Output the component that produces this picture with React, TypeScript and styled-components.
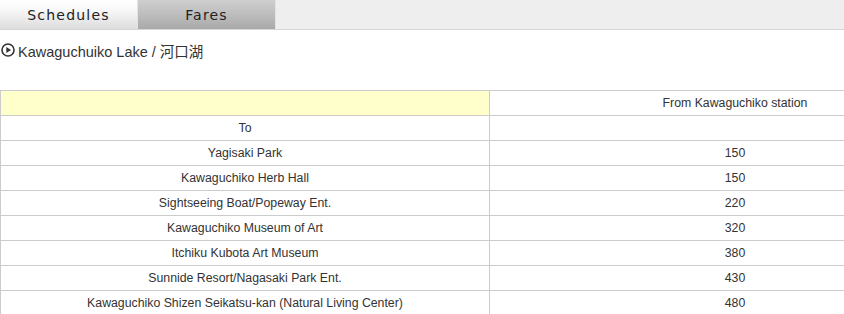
import React from "react";
import styled, { createGlobalStyle } from "styled-components";

const Global = createGlobalStyle`
  html, body { margin: 0; padding: 0; overflow: hidden; background: #fff; }
  body { font-family: Arial, "Liberation Sans", "Noto Sans CJK JP", sans-serif; color: #333; }
`;

const Page = styled.div`
  width: 980px;
`;

const TabBar = styled.div`
  display: flex;
  height: 29px;
  background: #eeeeee;
  border-bottom: 1px solid #d6d6d6;
`;

const Tab = styled.div<{ $active?: boolean }>`
  width: 137px;
  height: 29px;
  display: flex;
  align-items: center;
  justify-content: center;
  font-family: "DejaVu Sans", Verdana, sans-serif;
  font-size: 14px;
  letter-spacing: 1.2px;
  color: #222;
  background: ${(p) =>
    p.$active
      ? "linear-gradient(#ffffff, #f6f6f6 40%, #dcdcdc)"
      : "linear-gradient(#cfcfcf, #b9b9b9 60%, #a9a9a9)"};
  border-right: 1px solid #e4e4e4;
`;

const Title = styled.h2`
  display: flex;
  align-items: center;
  gap: 3px;
  margin: 10px 0 0 1px;
  font-size: 14.5px;
  font-weight: normal;
  color: #333;
  height: 20px;
`;

const Table = styled.table`
  margin-top: 30px;
  width: 980px;
  border-collapse: collapse;
  table-layout: fixed;
  font-size: 12.3px;
  color: #333;
`;

const Col = styled.col<{ $w: number }>`
  width: ${(p) => p.$w}px;
`;

const Cell = styled.td<{ $yellow?: boolean }>`
  height: 24px;
  padding: 0;
  border: 1px solid #cccccc;
  text-align: center;
  vertical-align: middle;
  white-space: nowrap;
  background: ${(p) => (p.$yellow ? "#ffffcc" : "#fff")};
`;

const rows: [string, string][] = [
  ["Yagisaki Park", "150"],
  ["Kawaguchiko Herb Hall", "150"],
  ["Sightseeing Boat/Popeway Ent.", "220"],
  ["Kawaguchiko Museum of Art", "320"],
  ["Itchiku Kubota Art Museum", "380"],
  ["Sunnide Resort/Nagasaki Park Ent.", "430"],
  ["Kawaguchiko Shizen Seikatsu-kan (Natural Living Center)", "480"],
];

const PlayIcon = () => (
  <svg width="14" height="14" viewBox="0 0 14 14">
    <circle cx="7" cy="7" r="6" fill="none" stroke="#333" strokeWidth="1.6" />
    <path d="M5.3 4.1 L10.1 7 L5.3 9.9 Z" fill="#333" />
  </svg>
);

export default function App() {
  return (
    <Page>
      <Global />
      <TabBar>
        <Tab $active>Schedules</Tab>
        <Tab>Fares</Tab>
      </TabBar>
      <Title>
        <PlayIcon />
        Kawaguchuiko Lake / 河口湖
      </Title>
      <Table>
        <colgroup>
          <Col $w={489} />
          <Col $w={491} />
        </colgroup>
        <tbody>
          <tr>
            <Cell $yellow />
            <Cell>From Kawaguchiko station</Cell>
          </tr>
          <tr>
            <Cell>To</Cell>
            <Cell />
          </tr>
          {rows.map(([a, b]) => (
            <tr key={a}>
              <Cell>{a}</Cell>
              <Cell>{b}</Cell>
            </tr>
          ))}
        </tbody>
      </Table>
    </Page>
  );
}
